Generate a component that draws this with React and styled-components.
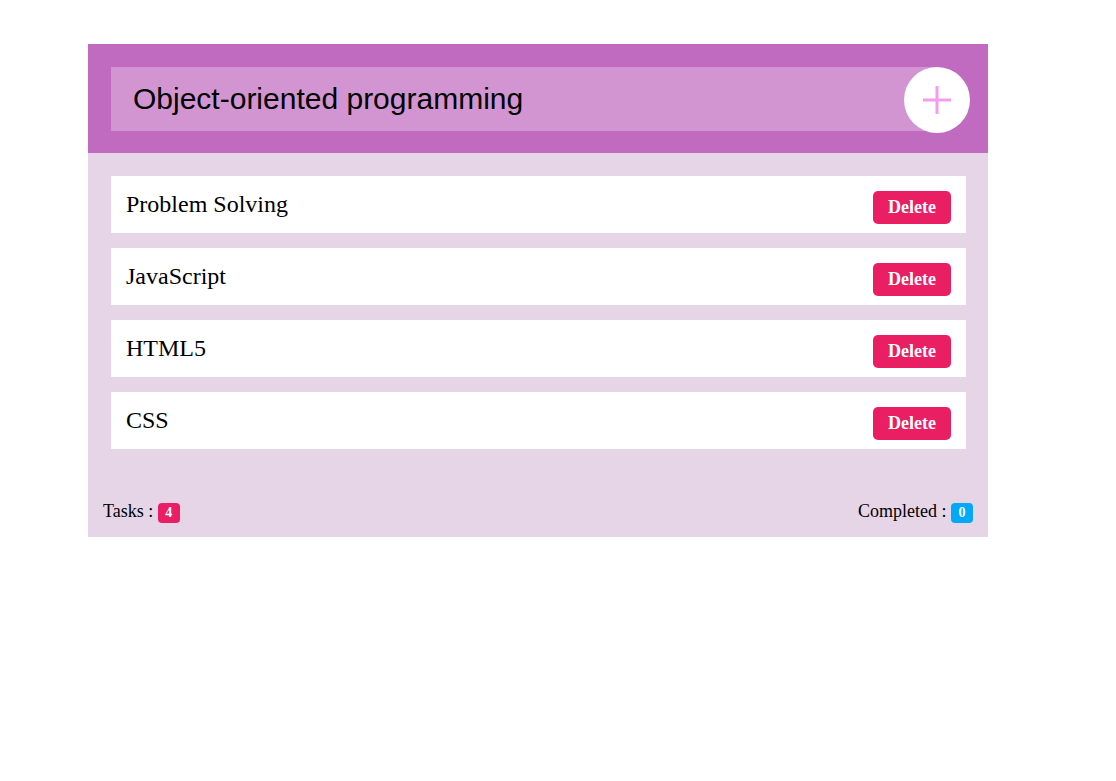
import React from 'react'
import styled, {createGlobalStyle} from 'styled-components';

const GlobalStyle = createGlobalStyle`
    body {
        margin: 0;
        background: #ffffff;
        font-family: "Liberation Serif", "Times New Roman", serif;
    }
`;

const tasks = ['Problem Solving', 'JavaScript', 'HTML5', 'CSS'];

const App = () => {
    return (
        <>
            <GlobalStyle />
            <Page>
                <Card>
                    <Header>
                        <TitleInput defaultValue="Object-oriented programming" />
                        <AddButton aria-label="add">
                            <svg width="32" height="32" viewBox="0 0 32 32">
                                <path d="M16 2v28M2 16h28" stroke="#f49cf0" strokeWidth="3" />
                            </svg>
                        </AddButton>
                    </Header>
                    <List>
                        {tasks.map(task => (
                            <Item key={task}>
                                <span>{task}</span>
                                <DeleteButton>Delete</DeleteButton>
                            </Item>
                        ))}
                    </List>
                    <Footer>
                        <span>Tasks : <Badge color="#e91e63">{tasks.length}</Badge></span>
                        <span>Completed : <Badge color="#03a9f4">0</Badge></span>
                    </Footer>
                </Card>
            </Page>
        </>
    )
};

const Page = styled.div`
    padding: 44px 0 0 88px;
`;

const Card = styled.div`
    width: 900px;
    background: #e6d5e6;
`;

const Header = styled.div`
    display: flex;
    align-items: flex-start;
    background: #c06bbf;
    padding: 23px 18px 20px 23px;
`;

const TitleInput = styled.input`
    flex: 1;
    height: 64px;
    box-sizing: border-box;
    border: none;
    outline: none;
    background: #d395d1;
    padding: 0 22px;
    font-family: "Liberation Sans", Arial, sans-serif;
    font-size: 30px;
    color: #000000;
`;

const AddButton = styled.button`
    width: 66px;
    height: 66px;
    margin-left: -36px;
    border: none;
    border-radius: 50%;
    background: #ffffff;
    display: flex;
    align-items: center;
    justify-content: center;
    padding: 0;
    cursor: pointer;
`;

const List = styled.div`
    display: flex;
    flex-direction: column;
    gap: 15px;
    padding: 23px 22px 38px 23px;
`;

const Item = styled.div`
    display: flex;
    align-items: center;
    justify-content: space-between;
    height: 57px;
    box-sizing: border-box;
    background: #ffffff;
    padding: 0 15px;
    font-size: 24px;
    color: #000000;
`;

const DeleteButton = styled.button`
    width: 78px;
    height: 33px;
    margin-top: 6px;
    border: none;
    border-radius: 5px;
    background: #e91e63;
    color: #ffffff;
    font-family: "Liberation Serif", "Times New Roman", serif;
    font-weight: bold;
    font-size: 18px;
    padding: 0;
`;

const Footer = styled.div`
    display: flex;
    justify-content: space-between;
    align-items: center;
    height: 50px;
    padding: 0 15px;
    font-size: 18px;
    color: #000000;
`;

const Badge = styled.span`
    display: inline-block;
    min-width: 22px;
    height: 20px;
    line-height: 20px;
    box-sizing: border-box;
    padding: 0 6px;
    border-radius: 4px;
    background: ${props => props.color};
    color: #ffffff;
    font-weight: bold;
    font-size: 14px;
    text-align: center;
    vertical-align: middle;
`;

export default App;
